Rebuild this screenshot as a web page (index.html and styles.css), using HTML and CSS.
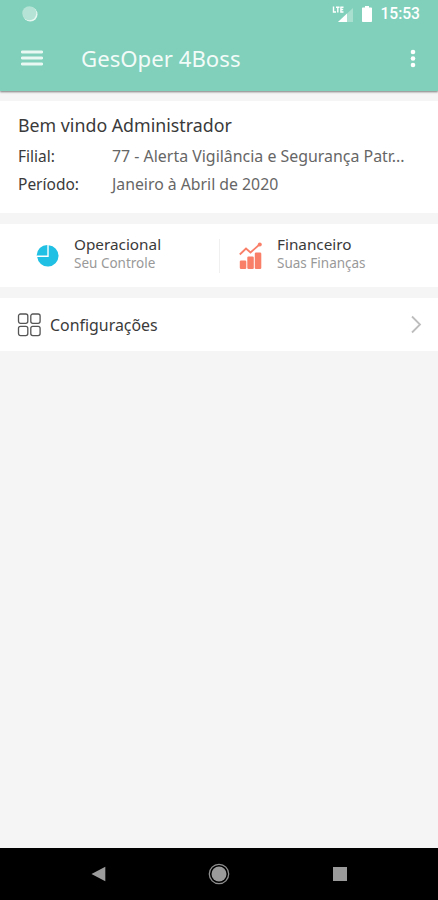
FILE: index.html
```html
<!DOCTYPE html>
<html lang="pt-BR">
<head>
  <meta charset="UTF-8">
  <meta name="viewport" content="width=device-width, initial-scale=1.0">
  <title>GesOper 4Boss</title>
  <link rel="stylesheet" href="styles.css">
</head>
<body>
  <header class="topo">
    <div class="status">
      <svg class="status-sync" width="16" height="16" viewBox="0 0 16 16">
        <circle cx="8.3" cy="8.3" r="7.2" fill="#e6f7f1"/>
        <circle cx="7.3" cy="7.2" r="7" fill="#b5e3d5"/>
      </svg>
      <div class="status-direita">
        <svg width="22" height="18" viewBox="0 0 22 18">
          <path d="M21 3v14H6z" fill="#a9dfcf"/>
          <path d="M15 8.600V17H6z" fill="#fff"/>
          <path d="M1.500 1.500v5.500h2.500M4 2.200h3.500M5.800 2.200v5.300M11.500 2.200H8.900v4.800h2.600M8.900 4.500h2.300" fill="none" stroke="#fff" stroke-width="1.400"/>
        </svg>
        <svg class="bateria" width="10" height="16" viewBox="0 0 10 16">
          <path d="M3 0h4v1.600h2.200q.8 0 .8.800v12.800q0 .8-.8.800H.8q-.8 0-.8-.8V2.400q0-.8.800-.8H3z" fill="#fff"/>
        </svg>
        <span class="hora">15:53</span>
      </div>
    </div>
    <div class="barra">
      <svg width="22" height="18" viewBox="0 0 22 18">
        <path d="M1.300 2h19.400M1.300 8h19.400M1.300 14h19.400" stroke="#e9f8f3" stroke-width="2.900" stroke-linecap="round"/>
      </svg>
      <h1 class="titulo">GesOper 4Boss</h1>
      <svg class="mais" width="6" height="20" viewBox="0 0 6 20">
        <g fill="#fff"><circle cx="3" cy="3" r="2.300"/><circle cx="3" cy="9.500" r="2.300"/><circle cx="3" cy="16" r="2.300"/></g>
      </svg>
    </div>
  </header>

  <main class="conteudo">
    <section class="cartao resumo">
      <h2 class="saudacao">Bem vindo Administrador</h2>
      <div class="linha">
        <span class="rotulo">Filial:</span>
        <span class="valor filial">77 - Alerta Vigilância e Segurança Patr...</span>
      </div>
      <div class="linha">
        <span class="rotulo">Período:</span>
        <span class="valor">Janeiro à Abril de 2020</span>
      </div>
    </section>

    <section class="cartao modulos">
      <a class="modulo">
        <svg width="24" height="24" viewBox="0 0 24 24">
          <path d="M12.700 1.200A10.700 10.700 0 1 1 1.200 13H12.700z" fill="#1fc0e3"/>
          <path d="M11.300 .9V11.600H.6A11 11 0 0 1 11.300 .9z" fill="#1fc0e3"/>
        </svg>
        <span class="modulo-texto">
          <span class="modulo-nome">Operacional</span>
          <span class="modulo-sub">Seu Controle</span>
        </span>
      </a>
      <a class="modulo financeiro">
        <svg width="24" height="28" viewBox="0 0 24 28">
          <g fill="#f97f69">
            <rect x=".8" y="18.500" width="6.500" height="8.500" rx="1.200"/>
            <rect x="8.300" y="14.500" width="6.500" height="12.500" rx="1.200"/>
            <rect x="15.800" y="10.500" width="6.500" height="16.500" rx="1.200"/>
            <circle cx="20.800" cy="2.500" r="2"/>
          </g>
          <path d="M.8 12.500l6.200-6 4.500 4L20.500 2.500" fill="none" stroke="#f97f69" stroke-width="1.800"/>
        </svg>
        <span class="modulo-texto">
          <span class="modulo-nome">Financeiro</span>
          <span class="modulo-sub">Suas Finanças</span>
        </span>
      </a>
    </section>

    <a class="cartao config">
      <svg width="24" height="24" viewBox="0 0 24 24">
        <g fill="none" stroke="#555" stroke-width="1.300">
          <rect x="1.500" y="1" width="9.300" height="9.300" rx="2"/>
          <rect x="13.800" y="1" width="9.300" height="9.300" rx="2"/>
          <rect x="1.500" y="13.300" width="9.300" height="9.300" rx="2"/>
          <rect x="13.800" y="13.300" width="9.300" height="9.300" rx="2"/>
        </g>
      </svg>
      <span class="config-nome">Configurações</span>
      <svg class="seta" width="12" height="20" viewBox="0 0 12 20">
        <path d="M2 1.500l8 8-8 8" fill="none" stroke="#bdbdbd" stroke-width="1.800"/>
      </svg>
    </a>
  </main>

  <nav class="navegacao">
    <svg width="16" height="16" viewBox="0 0 16 16"><path d="M1.500 8L15.300 .8v14.400z" fill="#9b9b9b"/></svg>
    <svg width="22" height="22" viewBox="0 0 22 22">
      <circle cx="11" cy="11" r="9.700" fill="none" stroke="#8f8f8f" stroke-width="1.300"/>
      <circle cx="11" cy="11" r="7.500" fill="#9b9b9b"/>
    </svg>
    <svg width="16" height="16" viewBox="0 0 16 16"><rect x="1" y="1" width="14" height="14" fill="#9b9b9b"/></svg>
  </nav>
</body>
</html>
```

FILE: styles.css
```css
* { box-sizing: border-box; }
body {
  margin: 0;
  height: 900px;
  display: flex;
  flex-direction: column;
  background-color: #f5f5f5;
  font-family: "Noto Sans", sans-serif;
  color: #3a3a3a;
}
svg {
  display: block;
  flex: none;
}
h1, h2 {
  margin: 0;
  font-weight: normal;
}
.topo {
  height: 91px;
  background-color: #80d0bb;
  box-shadow: 0 1px 2px rgba(0, 0, 0, 0.5);
}
.status {
  height: 28px;
  padding: 0 18px 0 22px;
  display: flex;
  align-items: center;
  justify-content: space-between;
}
.status-direita {
  display: flex;
  align-items: center;
}
.bateria { margin: 0 8px 0 8px; }
.hora {
  font-family: Roboto, sans-serif;
  font-size: 15.600px;
  font-weight: 500;
  line-height: 30px;
  color: #fff;
}
.barra {
  height: 62px;
  padding: 0 22px 0 21px;
  display: flex;
  align-items: center;
}
.titulo {
  margin-left: 38px;
  margin-top: -2px;
  font-size: 22.200px;
  color: #f2fbf8;
}
.mais { margin-left: auto; }
.conteudo {
  flex: 1;
  padding-top: 10px;
}
.cartao {
  background-color: #fff;
  margin-bottom: 11px;
}
.resumo {
  height: 112px;
  padding: 11px 18px 0;
}
.saudacao {
  font-size: 17.800px;
  line-height: 26px;
}
.linha {
  display: flex;
  height: 28px;
  line-height: 28px;
  font-size: 15.500px;
}
.saudacao + .linha { margin-top: 4px; }
.rotulo { width: 94px; }
.valor {
  font-size: 15.800px;
  color: #666;
  white-space: nowrap;
}
.filial { font-size: 15.920px; }
.modulos {
  height: 63px;
  display: flex;
  align-items: center;
}
.modulo {
  width: 219px;
  height: 34px;
  padding-left: 36px;
  display: flex;
  align-items: center;
}
.modulo svg { margin-right: 14px; }
.financeiro {
  padding-left: 19px;
  border-left: 1px solid #f0f0f0;
}
.modulo-texto {
  display: flex;
  flex-direction: column;
  padding-bottom: 3px;
}
.modulo-nome {
  font-size: 15.300px;
  line-height: 19px;
}
.modulo-sub {
  font-size: 13.500px;
  line-height: 19px;
  color: #999;
}
.config {
  height: 53px;
  padding: 0 16px 0 17px;
  display: flex;
  align-items: center;
}
.config-nome {
  margin-left: 9px;
  font-size: 15.900px;
}
.seta { margin-left: auto; }
.navegacao {
  height: 52px;
  padding: 0 90px;
  display: flex;
  align-items: center;
  justify-content: space-between;
  background-color: #000;
}
```
